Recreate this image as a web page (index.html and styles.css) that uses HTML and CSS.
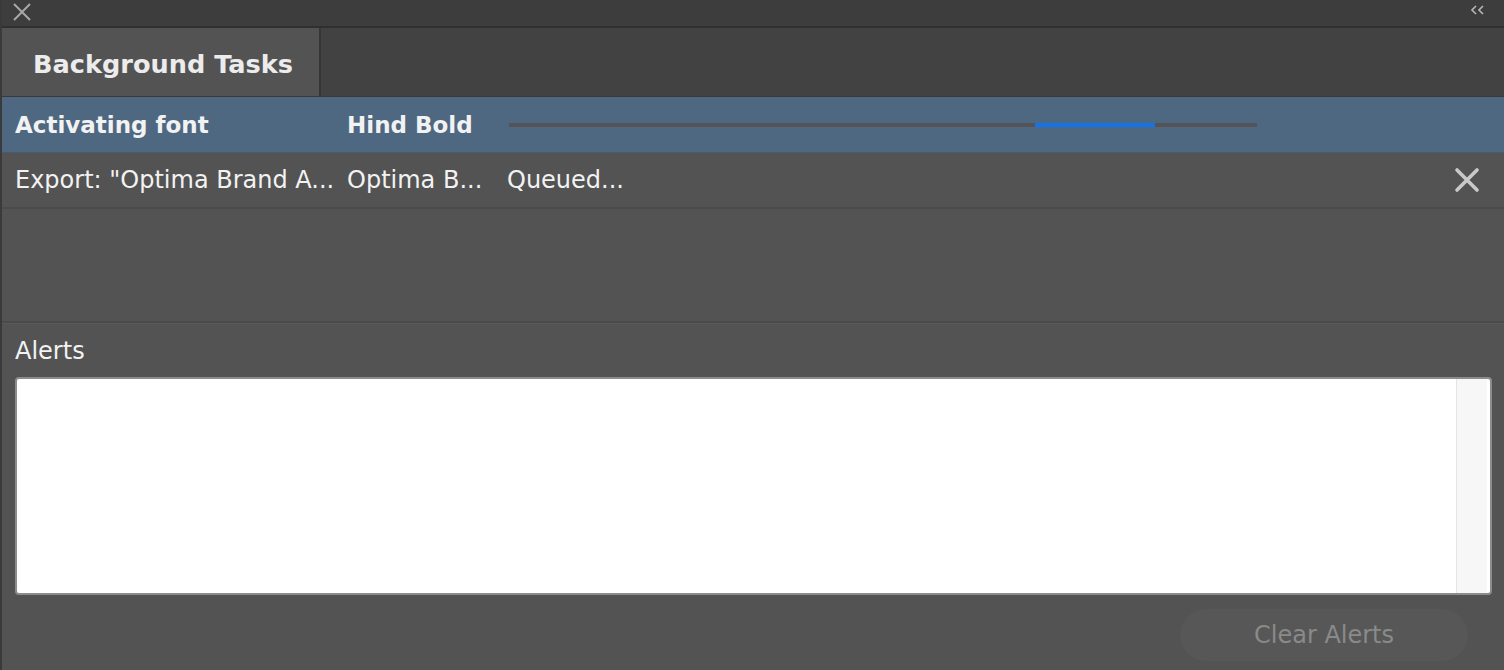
FILE: index.html
```html
<!DOCTYPE html>
<html>
<head>
<meta charset="utf-8">
<link rel="stylesheet" href="styles.css">
</head>
<body>
<div class="panel">
  <div class="titlebar">
    <svg class="close-icon" width="20" height="20" viewBox="0 0 20 20"><path d="M2 2 L18 18 M18 2 L2 18" stroke="#a8a8a8" stroke-width="2" fill="none"/></svg>
    <svg class="collapse-icon" width="16" height="10" viewBox="0 0 16 10"><path d="M6 1 L2 5 L6 9 M13 1 L9 5 L13 9" stroke="#b8b8b8" stroke-width="1.6" fill="none"/></svg>
  </div>
  <div class="tabs">
    <div class="tab">Background Tasks</div>
  </div>
  <div class="task selected">
    <div class="col-name">Activating font</div>
    <div class="col-font">Hind Bold</div>
    <div class="col-status">
      <div class="progress"><div class="progress-fill" style="margin-left:526px;width:120px"></div></div>
    </div>
  </div>
  <div class="task">
    <div class="col-name">Export: "Optima Brand A...</div>
    <div class="col-font">Optima B...</div>
    <div class="col-status">Queued...</div>
    <svg class="cancel-icon" width="26" height="26" viewBox="0 0 26 26"><path d="M3 3 L23 23 M23 3 L3 23" stroke="#c9c9c9" stroke-width="3.6" stroke-linecap="round" fill="none"/></svg>
  </div>
  <div class="empty"></div>
  <div class="alerts-label">Alerts</div>
  <div class="alerts-box">
    <div class="alerts-content"></div>
    <div class="scrollbar"></div>
  </div>
  <div class="footer">
    <button class="clear-btn">Clear Alerts</button>
  </div>
</div>
</body>
</html>
```
FILE: styles.css
```css
html, body {
  margin: 0;
  padding: 0;
}
body {
  width: 1504px;
  height: 670px;
  overflow: hidden;
  background: #535353;
  font-family: "DejaVu Sans", "Open Sans", sans-serif;
  color: #f2f2f2;
}
.panel {
  display: flex;
  flex-direction: column;
  height: 670px;
  border-left: 2px solid #3a3a3a;
  box-sizing: border-box;
}
.titlebar {
  height: 26px;
  background: #3d3d3d;
  border-bottom: 2px solid #303030;
  display: flex;
  align-items: center;
  justify-content: space-between;
  padding: 0 18px 0 10px;
  flex: none;
}
.close-icon { margin-top: -2px; }
.collapse-icon { margin-top: -6px; }
.tabs {
  height: 68px;
  background: #424242;
  border-bottom: 1px solid #3a3a3a;
  display: flex;
  flex: none;
}
.tab {
  width: 286px;
  background: #535353;
  border-right: 2px solid #363636;
  padding-left: 31px;
  font-weight: 700;
  font-size: 25.6px;
  line-height: 72px;
  color: #ececec;
  white-space: nowrap;
}
.task {
  height: 54px;
  display: flex;
  align-items: center;
  font-size: 24px;
  padding-left: 13px;
  border-bottom: 2px solid #4b4b4b;
  flex: none;
  position: relative;
}
.task.selected {
  background: #4f6882;
  font-weight: 700;
  font-size: 23px;
  height: 55px;
  border-bottom: 1px solid #4a5a6a;
}
.col-name { width: 332px; white-space: nowrap; overflow: hidden; }
.col-font { width: 160px; white-space: nowrap; overflow: hidden; }
.col-status { flex: 1; white-space: nowrap; }
.progress {
  width: 748px;
  height: 4px;
  background: #545458;
  display: flex;
  margin-left: 2px;
}
.progress-fill {
  height: 4px;
  background: #1473e6;
}
.cancel-icon {
  margin-right: 24px;
}
.empty {
  height: 112px;
  border-bottom: 2px solid #4a4a4a;
  box-shadow: 0 1px 0 #5a5a5a;
  flex: none;
}
.alerts-label {
  height: 54px;
  line-height: 56px;
  padding-left: 13px;
  font-size: 24px;
  color: #f2f2f2;
  flex: none;
}
.alerts-box {
  margin: 0 12px 0 13px;
  height: 214px;
  background: #fff;
  border: 2px solid #8c8c8c;
  border-radius: 4px;
  display: flex;
  flex: none;
}
.alerts-content { flex: 1; }
.scrollbar {
  width: 30px;
  background: #f7f7f7;
  border-left: 1px solid #e4e4e4;
  margin-right: 3px;
}
.footer {
  display: flex;
  justify-content: flex-end;
  padding: 14px 36px 0 0;
}
.clear-btn {
  width: 288px;
  height: 52px;
  border-radius: 26px;
  border: none;
  background: #575757;
  color: #8a8a8a;
  font-family: "DejaVu Sans", "Open Sans", sans-serif;
  font-size: 24px;
  padding: 0;
}
```
